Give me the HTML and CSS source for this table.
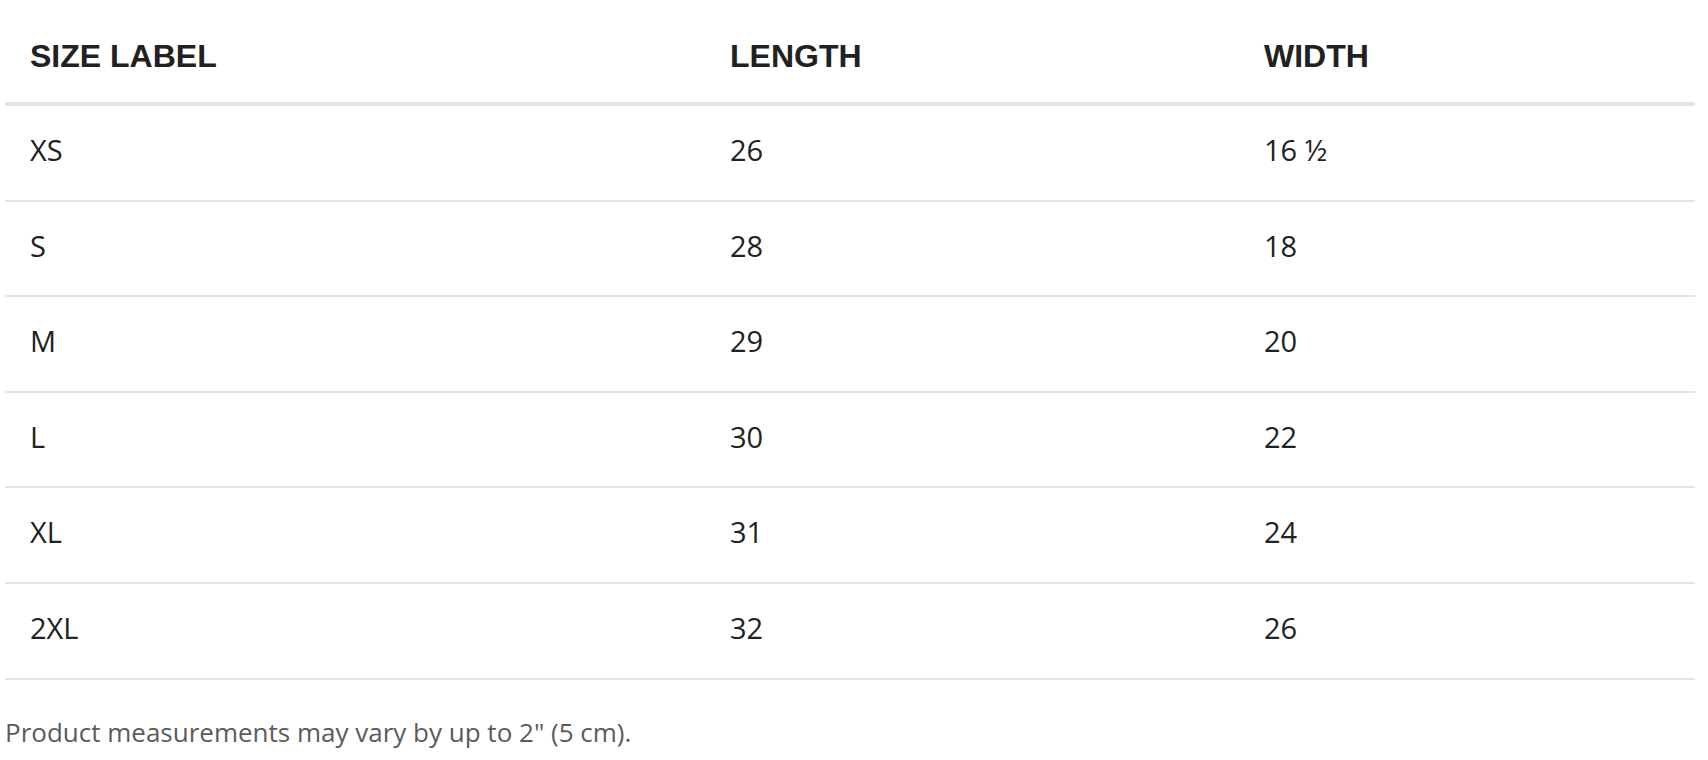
FILE: index.html
```html
<!DOCTYPE html>
<html lang="en">
<head>
<meta charset="utf-8">
<title>Size chart</title>
<link rel="stylesheet" href="styles.css">
</head>
<body>
<div class="size-chart">
  <table class="chart">
    <thead>
      <tr>
        <th class="c1">SIZE LABEL</th>
        <th class="c2">LENGTH</th>
        <th class="c3">WIDTH</th>
      </tr>
    </thead>
    <tbody>
      <tr><td>XS</td><td>26</td><td>16 ½</td></tr>
      <tr><td>S</td><td>28</td><td>18</td></tr>
      <tr><td>M</td><td>29</td><td>20</td></tr>
      <tr><td>L</td><td>30</td><td>22</td></tr>
      <tr><td>XL</td><td>31</td><td>24</td></tr>
      <tr><td>2XL</td><td>32</td><td>26</td></tr>
    </tbody>
  </table>
  <p class="note">Product measurements may vary by up to 2" (5 cm).</p>
</div>
</body>
</html>
```

FILE: styles.css
```css
html, body {
  margin: 0;
  padding: 0;
  background: #ffffff;
}

.size-chart {
  padding: 0 13px 0 5px;
  font-family: "Open Sans", Lato, "Liberation Sans", sans-serif;
  color: #222222;
}

.chart {
  width: 100%;
  border-collapse: collapse;
  table-layout: fixed;
}

.chart th {
  box-sizing: border-box;
  font-family: "Liberation Sans", Arial, sans-serif;
  font-weight: 700;
  font-size: 32px;
  line-height: 36px;
  text-align: left;
  vertical-align: top;
  color: #212121;
  padding: 38px 25px 28px;
  border-bottom: 4px solid #e4e4e4;
}

.chart .c1 { width: 700px; }
.chart .c2 { width: 534px; }

.chart td {
  font-size: 29px;
  line-height: 36px;
  vertical-align: top;
  padding: 26px 25px 31.6px;
  border-bottom: 2px solid #e4e4e4;
}

.note {
  margin: 34.6px 0 0;
  font-size: 26px;
  line-height: 36px;
  color: #5b5b5b;
}
```
